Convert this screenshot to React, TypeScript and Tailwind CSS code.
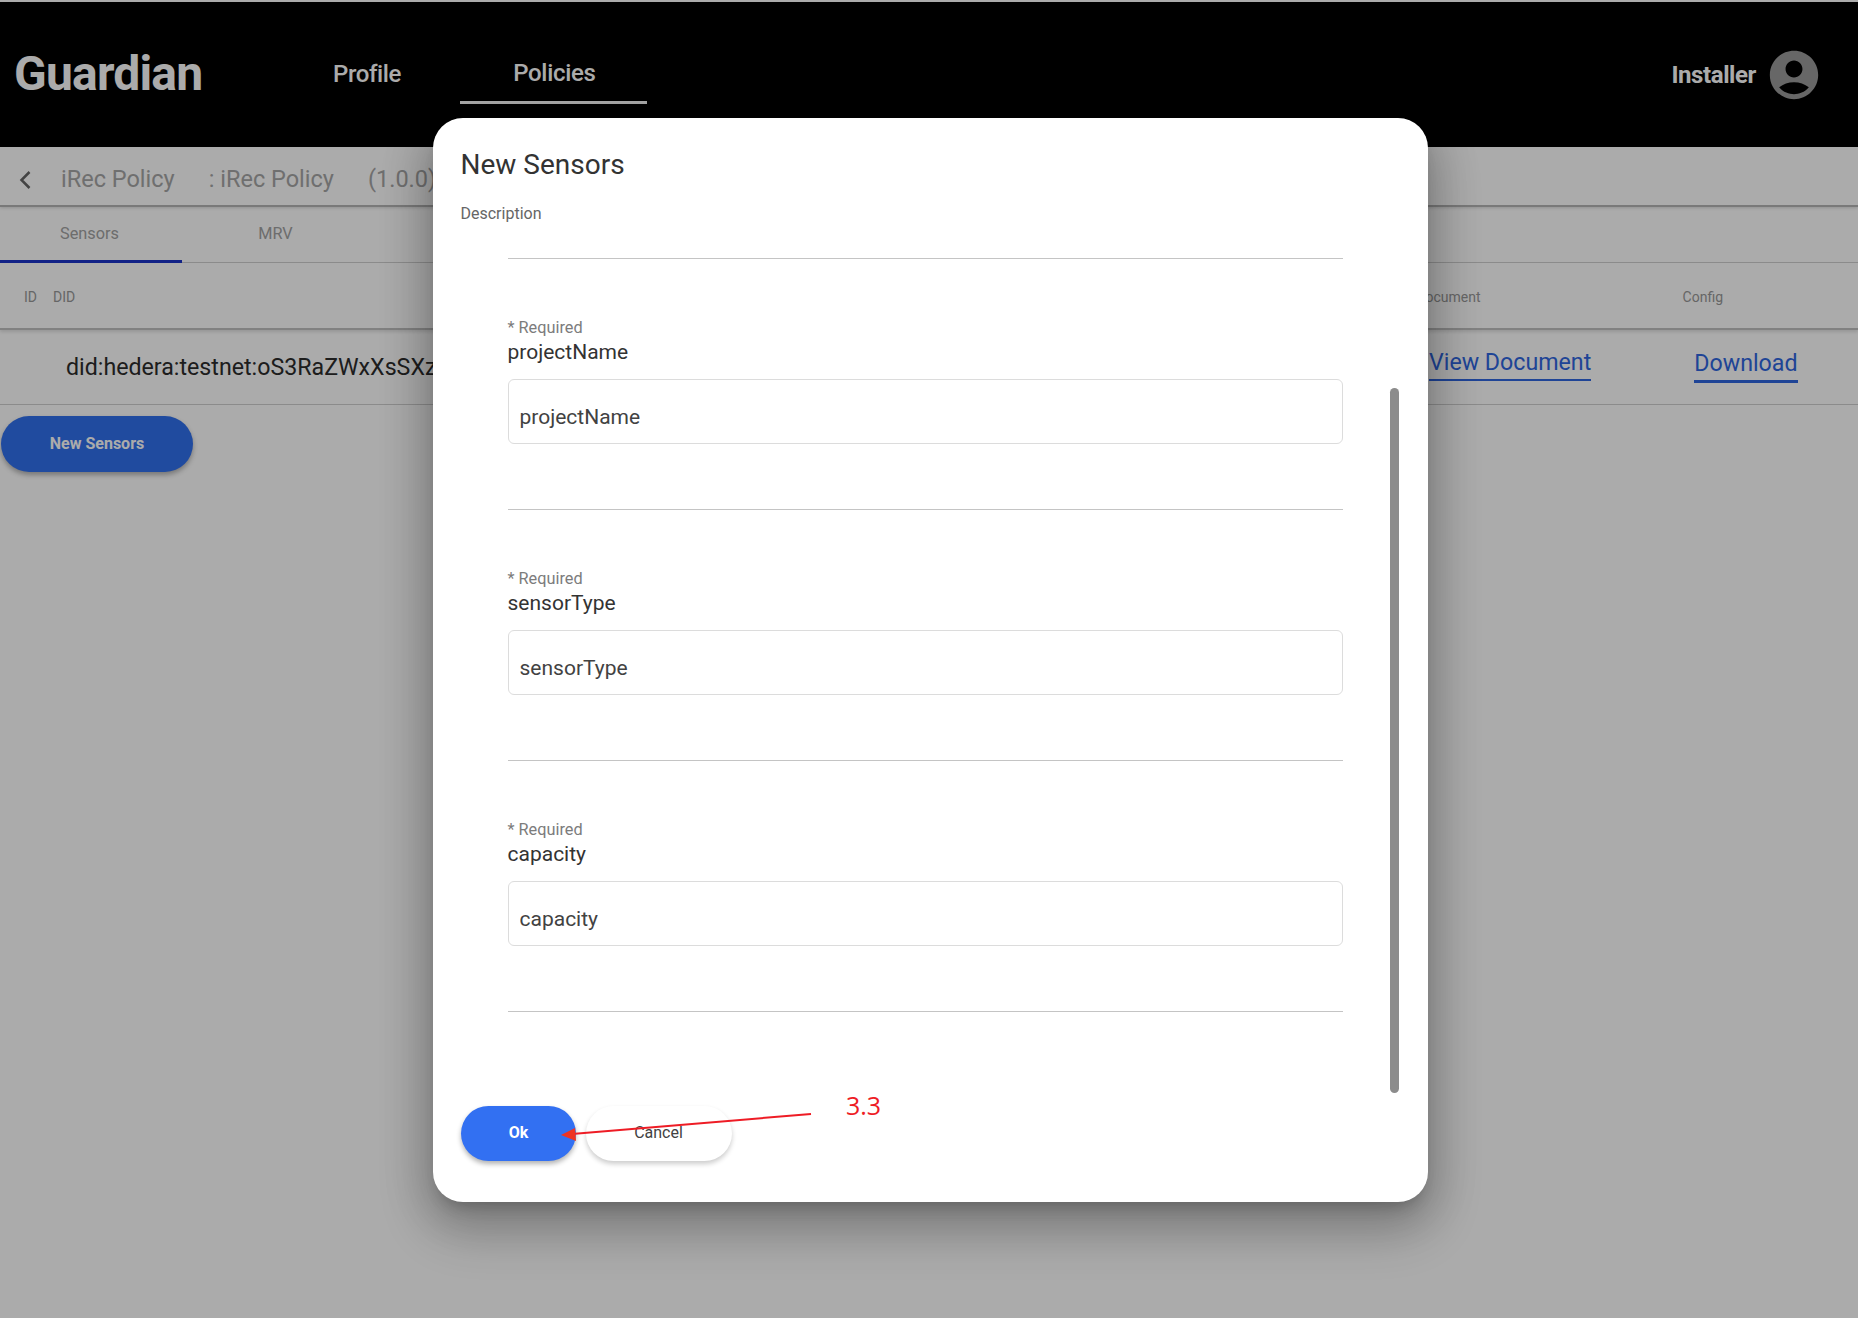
import React from 'react';

const fields = ['projectName', 'sensorType', 'capacity'];

const Field: React.FC<{ name: string }> = ({ name }) => (
  <div className="h-[251px] border-b border-[#c4c4c4] pt-[60px]">
    <div className="h-[18px] text-[16.3px] leading-[18px] text-[#7c7c7c]">* Required</div>
    <div className="h-[30px] text-[21px] leading-[30px] text-[#333333]">{name}</div>
    <input
      readOnly
      value={name}
      className="mt-[12px] block h-[65px] w-full rounded-[6px] border border-[#dcdcdc] px-[11px] pt-[10px] text-[21px] text-[#424242] outline-none"
    />
  </div>
);

export default function App() {
  return (
    <div className="relative h-[1318px] w-full overflow-hidden bg-white font-[Roboto,sans-serif]">
      {/* Page under the dialog */}
      <div className="h-[2px] bg-white" />
      <header className="flex h-[145px] items-center bg-black text-white">
        <div className="w-[333px] pl-[14px] pb-[2px] text-[48px] font-bold tracking-[-0.8px]">Guardian</div>
        <div className="pb-[1px] text-[24px] font-medium tracking-[-0.4px]">Profile</div>
        <div className="ml-[59px] flex h-[102px] w-[187px] items-center justify-center self-start border-b-[3px] border-white pl-[2px] pt-[43px] text-[24px] font-medium tracking-[-0.3px]">
          Policies
        </div>
        <div className="ml-auto mr-[35px] flex items-center">
          <span className="text-[24px] font-bold tracking-[-0.4px]">Installer</span>
          <svg viewBox="0 0 24 24" className="ml-[9px] h-[58px] w-[58px] fill-[#9a9a9a]">
            <path d="M12 2C6.48 2 2 6.48 2 12s4.48 10 10 10 10-4.48 10-10S17.52 2 12 2zm0 4c1.93 0 3.5 1.57 3.5 3.5S13.93 13 12 13s-3.5-1.57-3.5-3.5S10.07 6 12 6zm0 14c-2.03 0-4.43-.82-6.14-2.88C7.55 15.8 9.68 15 12 15s4.45.8 6.14 2.12C16.43 19.18 14.03 20 12 20z" />
          </svg>
        </div>
      </header>

      <div className="flex h-[60px] items-center border-b-2 border-[#b5b5b5] pt-[8px] text-[23.5px] text-[#a6a6a6] shadow-[0_1px_3px_rgba(0,0,0,0.15)]">
        <svg viewBox="0 0 12 20" className="ml-[19px] h-[20px] w-[12px] fill-none stroke-[#666666] stroke-[2.5]">
          <path d="M10.5 2 2.5 10l8 8" />
        </svg>
        <span className="ml-[30px]">iRec Policy</span>
        <span className="ml-[34px]">: iRec Policy</span>
        <span className="ml-[34px]">(1.0.0)</span>
      </div>

      <div className="flex h-[56px] border-b border-[#d0d0d0] text-[16.3px] text-[#a3a3a3]">
        <div className="flex h-[56px] w-[182px] items-center justify-center border-b-[3px] border-[#1c34c8] pr-[3px] pt-[1px]">Sensors</div>
        <div className="flex h-[54px] w-[187px] items-center justify-center pt-[1px]">MRV</div>
      </div>

      <div className="flex h-[67px] items-center border-b-2 border-[#c0c0c0] pt-[4px] text-[14px] text-[#999999] shadow-[0_2px_3px_rgba(0,0,0,0.12)]">
        <span className="ml-[24px]">ID</span>
        <span className="ml-[16px]">DID</span>
        <span className="ml-auto mr-[202px]">Document</span>
        <span className="mr-[135px]">Config</span>
      </div>

      <div className="flex h-[75px] items-center overflow-hidden whitespace-nowrap border-b border-[#d0d0d0] text-[23.2px]">
        <span className="ml-[66px] w-[1363px] text-[#2c2c2c]">did:hedera:testnet:oS3RaZWxXsSXz</span>
        <a className="mb-[8px] border-b-2 border-[#2f66e0] text-[#2f66e0]">View Document</a>
        <a className="mb-[5px] ml-[103px] border-b-[3px] border-[#2f66e0] text-[#2f66e0]">Download</a>
      </div>

      <button className="ml-[1px] mt-[11px] h-[56px] w-[192px] rounded-full bg-[#3170ee] text-[16px] font-bold text-white shadow-[0_3px_5px_rgba(0,0,0,0.3)]">
        New Sensors
      </button>

      {/* Dialog */}
      <div className="absolute inset-0 flex items-center justify-center bg-[rgba(0,0,0,0.33)]">
        <div className="relative ml-[2px] mt-[2px] flex h-[1084px] w-[995px] flex-col overflow-hidden rounded-[30px] bg-white shadow-[0_11px_15px_-7px_rgba(0,0,0,0.2),0_24px_50px_6px_rgba(0,0,0,0.2),0_9px_46px_8px_rgba(0,0,0,0.14)]">
          <div className="mt-[28px] h-[38px] px-[28px] text-[28px] leading-[38px] text-[#333333]">New Sensors</div>
          <div className="mt-[20px] h-[20px] px-[28px] text-[16px] leading-[20px] text-[#666666]">Description</div>
          <div className="flex-1 overflow-hidden pl-[75px] pr-[85px]">
            <div className="h-[35px] border-b border-[#c4c4c4]" />
            {fields.map(f => (
              <Field key={f} name={f} />
            ))}
          </div>
          <div className="flex gap-[10px] px-[28px] pb-[41px]">
            <button className="h-[55px] w-[115px] rounded-full bg-[#3270f2] pb-[2px] pl-[1px] text-[16px] font-bold text-white shadow-[0_3px_5px_rgba(0,0,0,0.3)]">
              Ok
            </button>
            <button className="h-[55px] w-[146px] rounded-full bg-white pb-[2px] text-[16px] text-[#424242] shadow-[0_3px_5px_rgba(0,0,0,0.2)]">
              Cancel
            </button>
          </div>
          {/* scrollbar thumb */}
          <div className="absolute right-[29px] top-[270px] h-[705px] w-[9px] rounded-full bg-[#8c8c8c]" />
        </div>
      </div>

      {/* Red annotation */}
      <svg viewBox="0 0 1858 1318" className="pointer-events-none absolute left-0 top-0 h-[1318px] w-[1858px]">
        <path d="M811 1114 572 1134" className="fill-none stroke-[#ee1c25] stroke-2" />
        <path d="M561 1135 575 1128 576 1141z" className="fill-[#ee3322]" />
      </svg>
      <div className="pointer-events-none absolute left-[846px] top-[1087px] font-['Open_Sans',sans-serif] text-[25px] text-[#ee1c25]">3.3</div>
    </div>
  );
}
